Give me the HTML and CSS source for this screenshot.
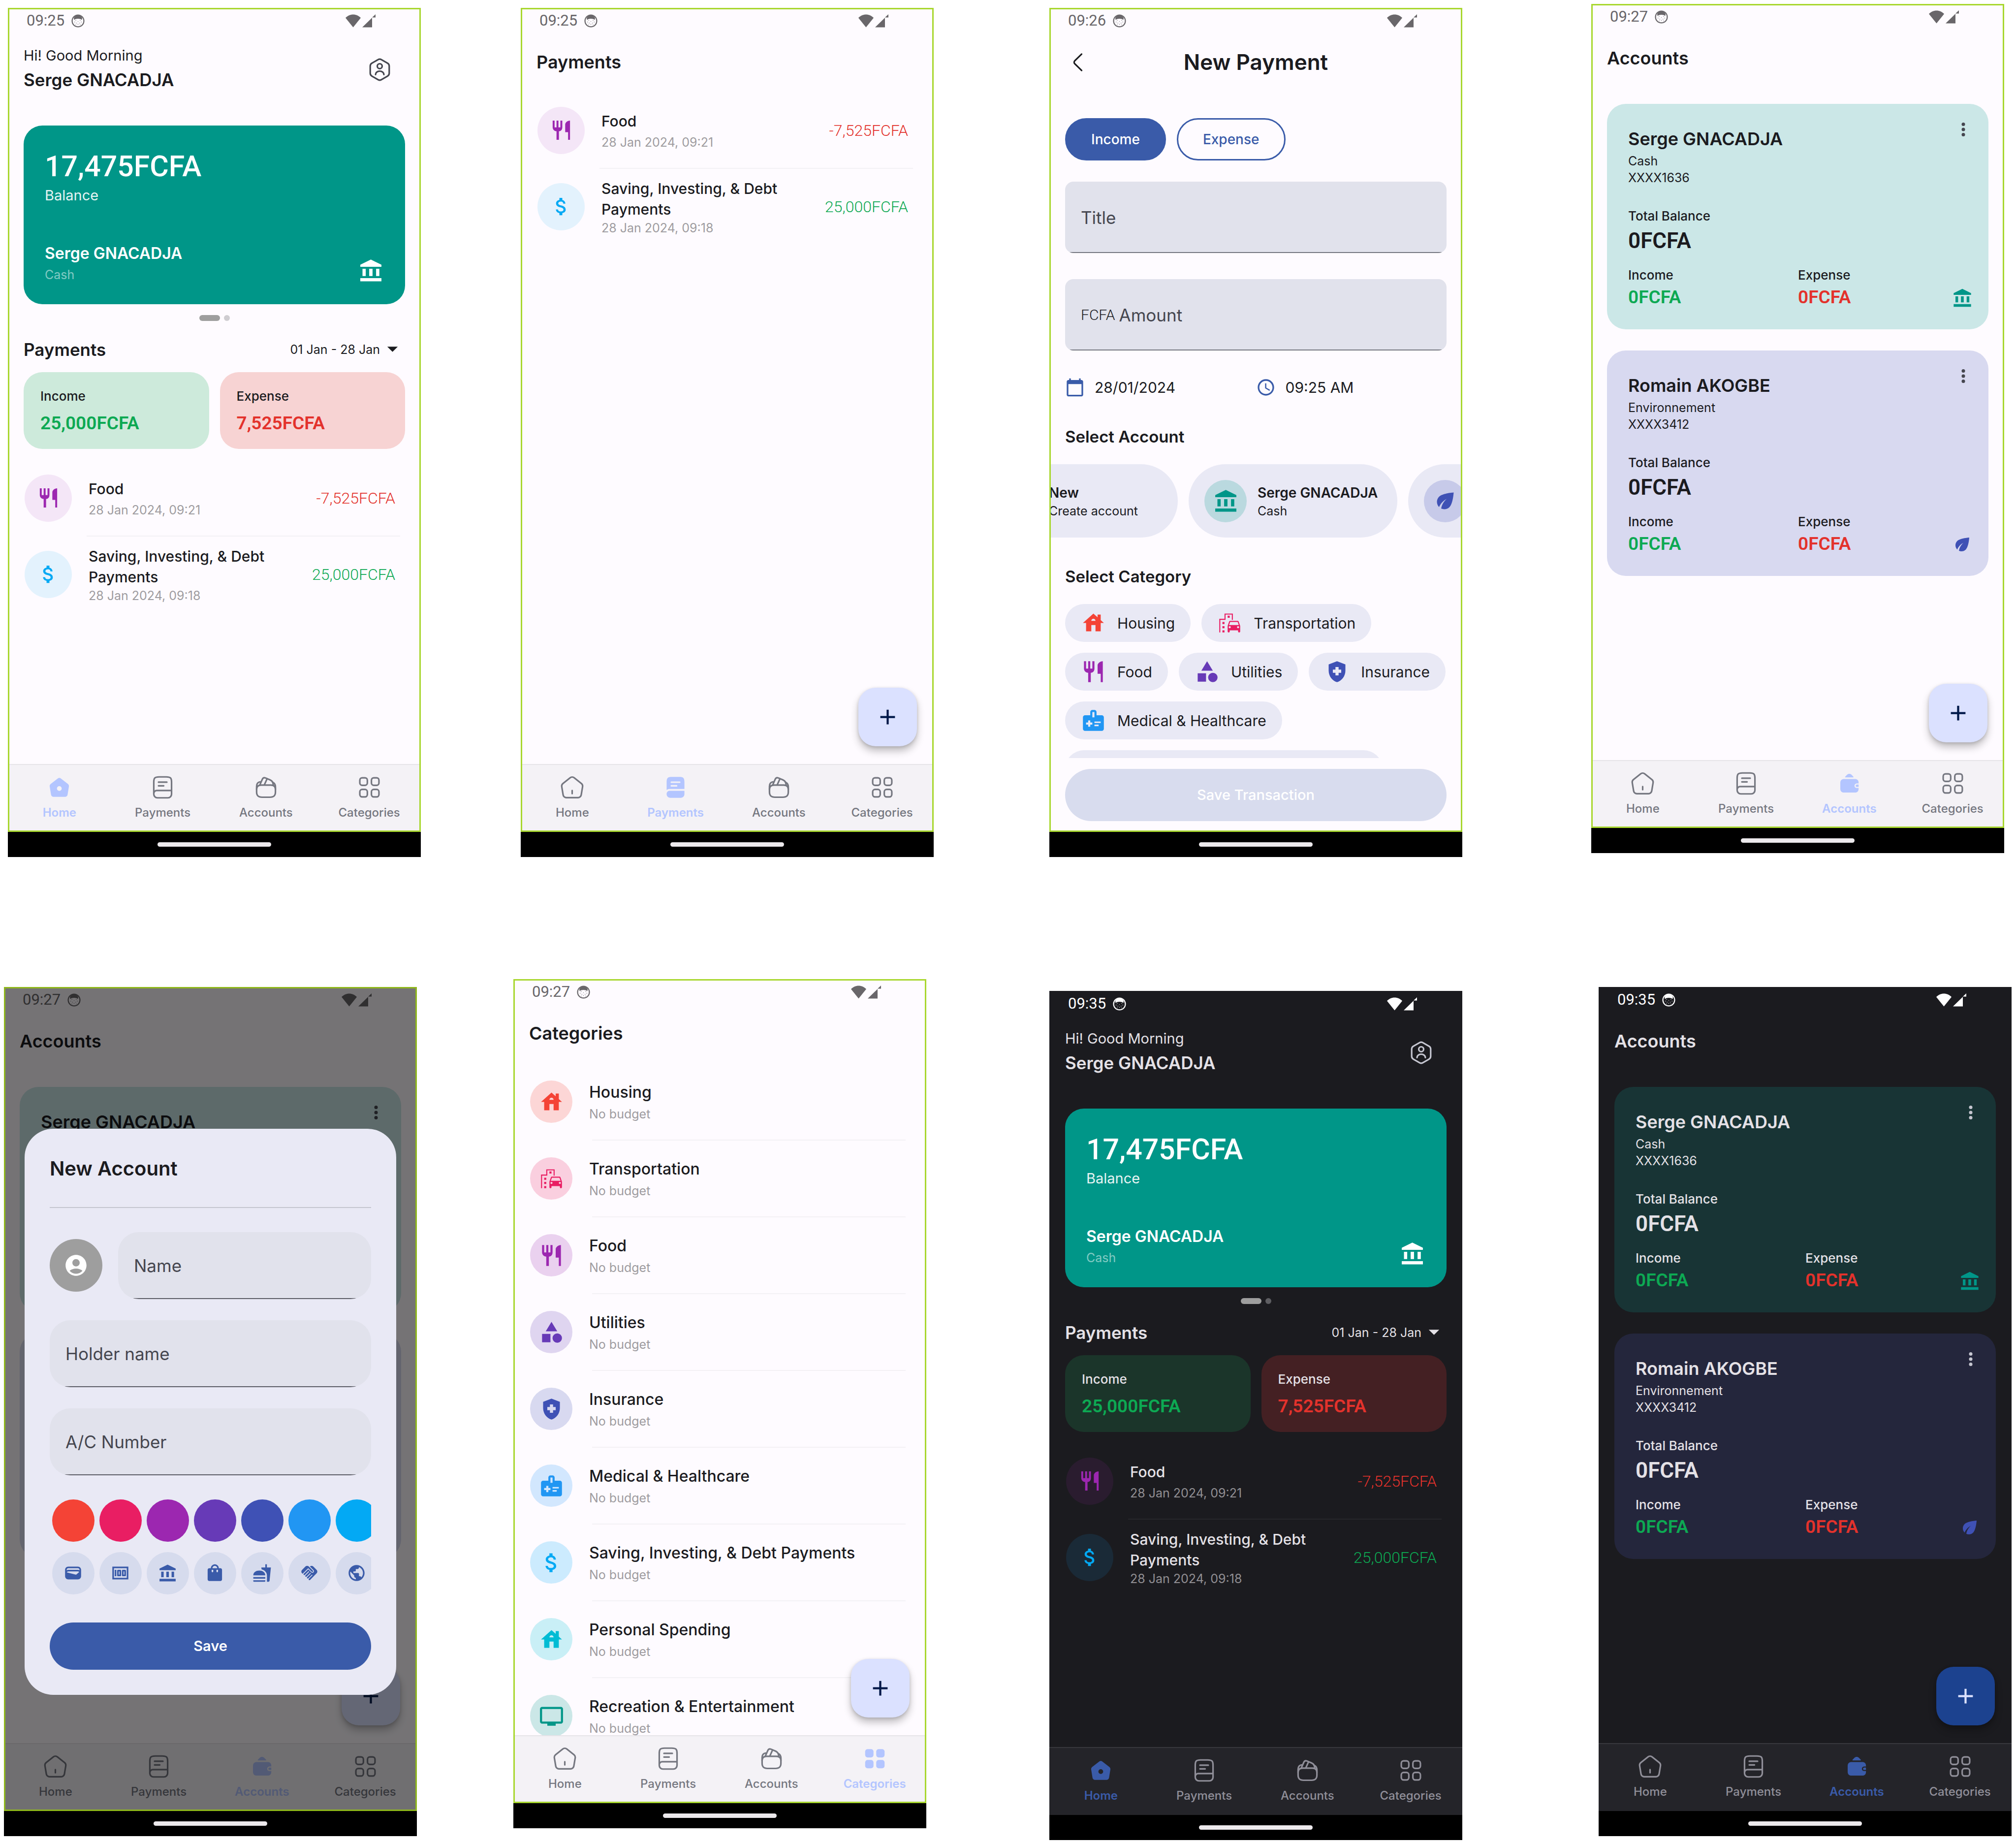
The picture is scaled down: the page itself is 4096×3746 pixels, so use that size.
FILE: index.html
```html
<!DOCTYPE html>
<html lang="en">
<head>
<meta charset="utf-8">
<meta name="viewport" content="width=device-width, initial-scale=1">
<title>Budget app screens</title>
<link rel="stylesheet" href="styles.css">
</head>
<body>
<svg class="sprite" aria-hidden="true">
  <symbol id="face" viewBox="0 0 24 24"><circle cx="12" cy="12" r="10.6" fill="none" stroke="currentColor" stroke-width="2"/><path fill="currentColor" d="M4.6 6.2C6.200 3.400 9 1.800 12 1.800s5.800 1.600 7.400 4.400c.2 1.600-.1 3.200-.9 4.200-.5-1-1.100-1.600-2-1.800-2.800-.7-6.200-.7-9 0-.9.200-1.500.8-2 1.800-.8-1-1.100-2.600-.9-4.200z"/><g fill="currentColor"><circle cx="8" cy="11" r=".6"/><circle cx="16" cy="11" r=".6"/><circle cx="12" cy="13" r=".5"/><circle cx="6" cy="14" r=".6"/><circle cx="18" cy="14" r=".6"/><circle cx="9" cy="16" r=".6"/><circle cx="15" cy="16" r=".6"/><circle cx="12" cy="18" r=".6"/><circle cx="8" cy="19" r=".5"/><circle cx="16" cy="19" r=".5"/></g></symbol>
  <symbol id="wifi" viewBox="0 0 31 27"><path fill="currentColor" d="M15.500 26.500 0 7.300C4.200 3 9.500.5 15.500.5S26.800 3 31 7.300z"/></symbol>
  <symbol id="signal" viewBox="0 0 27 27"><path fill="currentColor" d="M0 26.500 20 7v19.500zM20 6.500 27 0v6.500z"/></symbol>
  <symbol id="profile" viewBox="0 0 24 24"><g fill="none" stroke="currentColor" stroke-width="1.500" stroke-linecap="round" stroke-linejoin="round"><path d="M21.080 8.580v6.840c0 1.120-.6 2.160-1.570 2.730l-5.940 3.430c-.97.56-2.170.56-3.150 0l-5.940-3.430a3.150 3.150 0 0 1-1.570-2.730V8.580c0-1.120.6-2.160 1.570-2.730l5.940-3.430c.97-.56 2.170-.56 3.150 0l5.940 3.430c.97.57 1.570 1.600 1.570 2.730Z"/><circle cx="12" cy="8.670" r="2.330"/><path d="M16 16.660c0-1.800-1.790-3.260-4-3.260s-4 1.460-4 3.260"/></g></symbol>
  <symbol id="bank" viewBox="0 0 24 24"><path fill="currentColor" d="M12 1.500 22.100 6.500v2H1.900v-2zM4 10.300h3.100v7H4zM10.400 10.300h3.200v7h-3.200zM17 10.300h3.100v7H17zM1.900 19.300h20.200v3.100H1.900z"/></symbol>
  <symbol id="caret" viewBox="0 0 24 24"><path fill="currentColor" d="m7 9.500 5 5 5-5z"/></symbol>
  <symbol id="food" viewBox="0 0 24 24"><path fill="currentColor" d="M16 6v8h3v8h2V2c-2.760 0-5 2.240-5 4zm-5 3H9V2H7v7H5V2H3v7c0 2.210 1.790 4 4 4v9h2.500v-9c2.210 0 3.500-1.790 3.500-4V2h-2v7z"/></symbol>
  <symbol id="dollar" viewBox="0 0 24 24"><path fill="currentColor" d="M11.800 10.900c-2.270-.59-3-1.200-3-2.150 0-1.090 1.010-1.850 2.700-1.850 1.780 0 2.440.85 2.500 2.100h2.210c-.07-1.720-1.120-3.300-3.210-3.810V3h-3v2.160c-1.940.42-3.500 1.680-3.500 3.610 0 2.310 1.910 3.460 4.700 4.130 2.500.6 3 1.480 3 2.410 0 .69-.49 1.790-2.700 1.790-2.060 0-2.870-.92-2.980-2.100h-2.200c.12 2.190 1.760 3.420 3.680 3.830V21h3v-2.150c1.950-.37 3.500-1.500 3.500-3.550 0-2.840-2.430-3.810-4.700-4.400z"/></symbol>
  <symbol id="home" viewBox="0 0 24 24"><path fill="none" stroke="currentColor" stroke-width="1.500" stroke-linecap="round" stroke-linejoin="round" d="M10.070 2.820 3.140 8.370c-.78.62-1.280 1.930-1.110 2.910l1.330 7.960c.24 1.420 1.600 2.570 3.040 2.570h11.200c1.430 0 2.800-1.160 3.040-2.570l1.330-7.960c.16-.98-.34-2.290-1.110-2.910l-6.930-5.540c-1.070-.86-2.800-.86-3.860-.01ZM12 18v-3"/></symbol>
  <symbol id="home-on" viewBox="0 0 24 24"><path fill="currentColor" fill-rule="evenodd" d="M10.500 3.500 3.800 8.700c-.7.600-1.100 1.400-1 2.300l1.300 8c.2 1.200 1.200 2 2.400 2h11c1.200 0 2.200-.8 2.400-2l1.300-8c.1-.9-.3-1.700-1-2.300l-6.700-5.200c-.9-.7-2.100-.7-3 0ZM12 10.800a2.300 2.300 0 1 1 0 4.600 2.300 2.300 0 0 1 0-4.600Z"/></symbol>
  <symbol id="book" viewBox="0 0 24 24"><path fill="none" stroke="currentColor" stroke-width="1.500" stroke-linecap="round" stroke-linejoin="round" d="M3.500 18V7c0-4 1-5 5-5h7c4 0 5 1 5 5v10c0 .14 0 .28-.01.42M6.350 15H20.500v3.500c0 1.930-1.570 3.500-3.500 3.500H7c-1.930 0-3.500-1.570-3.500-3.500v-.65C3.500 16.280 4.780 15 6.350 15ZM8 7h8M8 10.500h5"/></symbol>
  <symbol id="book-on" viewBox="0 0 24 24"><path fill="currentColor" fill-rule="evenodd" d="M3.500 14.500V7c0-4 1-5 5-5h7c4 0 5 1 5 5v6.500h-14c-1.200 0-2.200.3-3 1ZM8 6.300a.75.75 0 0 0 0 1.500h8a.75.75 0 0 0 0-1.500zM8 9.800a.75.75 0 0 0 0 1.500h5a.75.75 0 0 0 0-1.500zM6.350 15.300H20.500v3.200c0 1.930-1.570 3.500-3.500 3.500H7c-1.930 0-3.500-1.570-3.500-3.500v-.35c0-1.570 1.280-2.850 2.850-2.850Z"/></symbol>
  <symbol id="wallet" viewBox="0 0 24 24"><g fill="none" stroke="currentColor" stroke-width="1.500" stroke-linecap="round" stroke-linejoin="round"><path d="M3 13.800c0-2.900 1.600-4 4.400-4h9.200c2.800 0 4.400 1.100 4.400 4v2.600c0 3.500-1.600 5-5.200 5H8.200c-3.600 0-5.200-1.500-5.200-5z"/><path d="M3 14v-3c0-2.200 1-3.900 3.300-4.300M21 14v-2.600c0-1.900-.8-3.300-2.200-4.100M6 9.800l2.500-5.600c.6-1.300 1.700-1.700 3-1.200l4.300 1.800c2 .9 3.200 2.500 3 5M10.400 9.600l2.700-6"/></g></symbol>
  <symbol id="wallet-on" viewBox="0 0 24 24"><path fill="currentColor" d="M8.300 6.200c-.5 0-.6-.4-.3-.7l1.800-1.800c1.300-1.200 2.900-1.200 4.200 0l1.800 1.800c.3.300.2.700-.3.700zM20.800 12h-1.300c-1.600 0-2.600.9-2.600 2.200s1 2.200 2.600 2.200h1.300v.6c0 2.500-1.300 3.700-3.700 3.700H7.200c-2.500 0-3.900-1.200-3.900-3.700v-5.500c0-2.500 1.400-3.700 3.900-3.700h9.900c2.400 0 3.700 1.200 3.700 3.500zM19.300 13.100h1.500v2.200h-1.500c-.8 0-1.300-.5-1.300-1.100s.5-1.100 1.300-1.100z"/></symbol>
  <symbol id="grid" viewBox="0 0 24 24"><g fill="none" stroke="currentColor" stroke-width="1.500"><rect x="2.850" y="2.850" width="7.200" height="7.200" rx="2.300"/><rect x="13.950" y="2.850" width="7.200" height="7.200" rx="2.300"/><rect x="2.850" y="13.950" width="7.200" height="7.200" rx="2.300"/><rect x="13.950" y="13.950" width="7.200" height="7.200" rx="2.300"/></g></symbol>
  <symbol id="grid-on" viewBox="0 0 24 24"><g fill="currentColor"><rect x="2.700" y="2.900" width="8" height="8" rx="2.400"/><rect x="13.300" y="2.900" width="8" height="8" rx="2.400"/><rect x="2.700" y="13.300" width="8" height="8" rx="2.400"/><rect x="13.300" y="13.300" width="8" height="8" rx="2.400"/></g></symbol>
  <symbol id="plus" viewBox="0 0 24 24"><path fill="currentColor" d="M19 13h-6v6h-2v-6H5v-2h6V5h2v6h6z"/></symbol>
  <symbol id="back" viewBox="0 0 24 24"><path fill="none" stroke="currentColor" stroke-width="1.500" stroke-linecap="round" stroke-linejoin="round" d="M15.800 4.200 9.300 10.500c-.9.900-.9 2.100 0 3l6.500 6.300"/></symbol>
  <symbol id="calendar" viewBox="0 0 24 24"><path fill="currentColor" d="M20 3h-1V1h-2v2H7V1H5v2H4c-1.100 0-2 .9-2 2v16c0 1.100.9 2 2 2h16c1.100 0 2-.9 2-2V5c0-1.100-.9-2-2-2zm0 18H4V8h16v13z"/></symbol>
  <symbol id="clock" viewBox="0 0 24 24"><path fill="currentColor" d="M11.990 2C6.470 2 2 6.480 2 12s4.470 10 9.990 10C17.520 22 22 17.520 22 12S17.520 2 11.990 2zM12 20c-4.420 0-8-3.580-8-8s3.580-8 8-8 8 3.580 8 8-3.580 8-8 8zm.5-13H11v6l5.250 3.150.75-1.230-4.500-2.670z"/></symbol>
  <symbol id="leaf" viewBox="0 0 24 24"><path fill="currentColor" d="M6.050 8.050c-2.730 2.730-2.730 7.150-.02 9.880 1.470-3.400 4.090-6.240 7.360-7.930-2.770 2.340-4.710 5.610-5.390 9.320 2.600 1.230 5.800.78 7.950-1.370C19.430 14.470 20 4 20 4S9.530 4.570 6.050 8.050z"/></symbol>
  <symbol id="house" viewBox="0 0 24 24"><path fill="currentColor" d="M19 9.300V4h-3v2.600L12 3 2 12h3v8h5v-6h4v6h5v-8h3l-3-2.700zm-9 .7c0-1.100.9-2 2-2s2 .9 2 2h-4z"/></symbol>
  <symbol id="transport" viewBox="0 0 24 24"><path fill="currentColor" d="M20.570 10.660c-.14-.4-.52-.66-.97-.66h-7.190c-.46 0-.83.26-.98.66L10 14.770l.01 5.510c0 .38.31.72.69.72h.62c.38 0 .68-.38.68-.76V19h8v1.240c0 .38.31.76.69.76h.61c.38 0 .69-.34.69-.72l.01-1.370v-4.140l-1.430-4.110zm-8.160.34h7.190l1.030 3h-9.250l1.030-3zM12 17c-.55 0-1-.45-1-1s.45-1 1-1 1 .45 1 1-.45 1-1 1zm8 0c-.55 0-1-.45-1-1s.45-1 1-1 1 .45 1 1-.45 1-1 1zM14 9h1V3H7v5H2v13h1V9h5V4h6zM5 11h2v2H5zM10 5h2v2h-2zM5 15h2v2H5zM5 19h2v2H5z"/></symbol>
  <symbol id="shapes" viewBox="0 0 24 24"><path fill="currentColor" d="m12 2-5.500 9h11zM3 13.500h8v8H3z"/><circle cx="17.500" cy="17.500" r="4.500" fill="currentColor"/></symbol>
  <symbol id="shield" viewBox="0 0 24 24"><path fill="currentColor" fill-rule="evenodd" d="M12 2 4 5v6.090c0 5.050 3.410 9.760 8 10.910 4.590-1.150 8-5.860 8-10.910V5zM10.500 13H8v-3h2.500V7.500h3V10H16v3h-2.500v2.500h-3z"/></symbol>
  <symbol id="medical" viewBox="0 0 24 24"><path fill="currentColor" fill-rule="evenodd" d="M20 7h-5V4c0-1.100-.9-2-2-2h-2c-1.100 0-2 .9-2 2v3H4c-1.100 0-2 .9-2 2v11c0 1.100.9 2 2 2h16c1.100 0 2-.9 2-2V9c0-1.100-.9-2-2-2zM11 4h2v5h-2V4zm0 12H9v2H7v-2H5v-2h2v-2h2v2h2v2zm2-1.500V13h6v1.500h-6zm0 3V16h4v1.500h-4z"/></symbol>
  <symbol id="tv" viewBox="0 0 24 24"><path fill="currentColor" d="M21 3H3c-1.100 0-2 .9-2 2v12c0 1.100.9 2 2 2h5v2h8v-2h5c1.100 0 2-.9 2-2V5c0-1.100-.9-2-2-2zm0 14H3V5h18v12z"/></symbol>
  <symbol id="more" viewBox="0 0 24 24"><g fill="currentColor"><circle cx="12" cy="6" r="2"/><circle cx="12" cy="12" r="2"/><circle cx="12" cy="18" r="2"/></g></symbol>
  <symbol id="person" viewBox="0 0 24 24"><path fill="currentColor" fill-rule="evenodd" d="M12 2C6.480 2 2 6.480 2 12s4.480 10 10 10 10-4.480 10-10S17.520 2 12 2zm0 4c1.930 0 3.500 1.570 3.500 3.500S13.930 13 12 13s-3.500-1.570-3.500-3.500S10.070 6 12 6zm0 14c-2.030 0-4.430-.82-6.140-2.880C7.550 15.800 9.680 15 12 15s4.450.8 6.140 2.120C16.430 19.180 14.030 20 12 20z"/></symbol>
  <symbol id="purse" viewBox="0 0 24 24"><path fill="currentColor" fill-rule="evenodd" d="M18 4H6C3.790 4 2 5.790 2 8v8c0 2.210 1.790 4 4 4h12c2.210 0 4-1.790 4-4V8c0-2.210-1.790-4-4-4zm-1.860 9.770c-.24.2-.57.28-.88.2L4.150 11.250C4.450 10.520 5.160 10 6 10h12c.67 0 1.260.34 1.630.84l-3.490 2.930zM6 6h12c1.100 0 2 .9 2 2v.55c-.59-.34-1.270-.55-2-.55H6c-.73 0-1.410.21-2 .55V8c0-1.100.9-2 2-2z"/></symbol>
  <symbol id="note" viewBox="0 0 24 24"><path fill="currentColor" fill-rule="evenodd" d="M5 8h2v8H5zm7 0H9c-.55 0-1 .45-1 1v6c0 .55.45 1 1 1h3c.55 0 1-.45 1-1V9c0-.55-.45-1-1-1zm-1 6h-1v-4h1v4zm7-6h-3c-.55 0-1 .45-1 1v6c0 .55.45 1 1 1h3c.55 0 1-.45 1-1V9c0-.55-.45-1-1-1zm-1 6h-1v-4h1v4z"/><path fill="currentColor" fill-rule="evenodd" d="M2 4v16h20V4H2zm2 14V6h16v12H4z"/></symbol>
  <symbol id="bag" viewBox="0 0 24 24"><path fill="currentColor" fill-rule="evenodd" d="M19 6h-2c0-2.760-2.240-5-5-5S7 3.240 7 6H5c-1.100 0-2 .9-2 2v12c0 1.100.9 2 2 2h14c1.100 0 2-.9 2-2V8c0-1.100-.9-2-2-2zm-9 4c0 .55-.45 1-1 1s-1-.45-1-1V8h2v2zm2-7c1.660 0 3 1.340 3 3H9c0-1.660 1.340-3 3-3zm4 7c0 .55-.45 1-1 1s-1-.45-1-1V8h2v2z"/></symbol>
  <symbol id="burger" viewBox="0 0 24 24"><path fill="currentColor" d="M18.060 22.990h1.660c.84 0 1.530-.64 1.630-1.460L23 5.050h-5V1h-1.970v4.050h-4.970l.3 2.340c1.710.47 3.310 1.320 4.270 2.260 1.440 1.420 2.430 2.890 2.430 5.290v8.050zM1 21.990V21h15.030v.99c0 .55-.45 1-1.010 1H2.010c-.56 0-1.010-.45-1.010-1zm15.030-7c0-8-15.030-8-15.030 0h15.030zM1.020 17h15v2h-15z"/></symbol>
  <symbol id="hands" viewBox="0 0 24 24"><path fill="currentColor" d="M16.480 10.410c-.39.39-1.040.39-1.430 0l-4.470-4.460-7.050 7.040-.66-.63c-1.170-1.170-1.170-3.070 0-4.240l4.240-4.240c1.170-1.170 3.070-1.170 4.240 0L16.480 9c.39.39.39 1.020 0 1.410zm.7-2.120c.78.78.78 2.050 0 2.830-1.270 1.270-2.610.22-2.830 0l-3.760-3.760-5.570 5.570c-.39.39-.39 1.020 0 1.410.39.39 1.020.39 1.420 0l4.620-4.620.71.71-4.620 4.620c-.39.39-.39 1.020 0 1.410.39.39 1.020.39 1.420 0l4.620-4.620.71.71-4.620 4.620c-.39.39-.39 1.020 0 1.410.39.39 1.020.39 1.410 0l4.620-4.620.71.71-4.620 4.620c-.39.39-.39 1.020 0 1.410.39.39 1.020.39 1.410 0l8.320-8.340c1.170-1.170 1.170-3.070 0-4.240l-4.240-4.240c-1.150-1.150-3.010-1.170-4.180-.06l4.470 4.470z"/></symbol>
  <symbol id="globe" viewBox="0 0 24 24"><path fill="currentColor" fill-rule="evenodd" d="M12 2C6.480 2 2 6.480 2 12s4.480 10 10 10 10-4.480 10-10S17.520 2 12 2zm-1 17.930c-3.950-.49-7-3.850-7-7.930 0-.62.080-1.210.21-1.790L9 15v1c0 1.100.9 2 2 2v1.930zm6.900-2.540c-.26-.81-1-1.390-1.900-1.390h-1v-3c0-.55-.45-1-1-1H8v-2h2c.55 0 1-.45 1-1V7h2c1.100 0 2-.9 2-2v-.41c2.930 1.190 5 4.060 5 7.410 0 2.080-.8 3.970-2.100 5.390z"/></symbol>
</svg>

<main class="board">
  <div class="board-row board-row-top">

    <section class="phone" aria-label="Home">
      <div class="screen">
        <div class="status"><span>09:25</span><svg class="st-face"><use href="#face"/></svg><svg class="st-wifi"><use href="#wifi"/></svg><svg class="st-signal"><use href="#signal"/></svg></div>
        <div class="content padded">
          <header class="greeting">
            <div><p class="hello">Hi! Good Morning</p><h2 class="user">Serge GNACADJA</h2></div>
            <button class="icon-button" type="button" aria-label="Profile"><svg class="icon"><use href="#profile"/></svg></button>
          </header>
          <article class="balance-card">
            <p class="balance-sum">17,475FCFA</p>
            <p class="balance-label">Balance</p>
            <div class="balance-foot">
              <div><h3 class="holder">Serge GNACADJA</h3><p class="small faded">Cash</p></div>
              <svg class="icon"><use href="#bank"/></svg>
            </div>
          </article>
          <div class="pager"><i class="pager-on"></i><i></i></div>
          <div class="section-head"><h3 class="section-title">Payments</h3><button class="range" type="button">01 Jan - 28 Jan<svg class="icon"><use href="#caret"/></svg></button></div>
          <div class="totals">
            <div class="total total-in"><p class="small strong">Income</p><p class="sum in">25,000FCFA</p></div>
            <div class="total total-out"><p class="small strong">Expense</p><p class="sum out">7,525FCFA</p></div>
          </div>
          <ul class="payments">
            <li><span class="disc disc-food"><svg class="icon-list"><use href="#food"/></svg></span><div class="entry"><h4>Food</h4><p class="small muted">28 Jan 2024, 09:21</p></div><span class="amount out">-7,525FCFA</span></li>
            <li><span class="disc disc-saving"><svg class="icon-list"><use href="#dollar"/></svg></span><div class="entry"><h4>Saving, Investing, &amp; Debt Payments</h4><p class="small muted">28 Jan 2024, 09:18</p></div><span class="amount in">25,000FCFA</span></li>
          </ul>
        </div>
        <nav class="tabs">
          <a class="tab-on" href="#"><svg class="icon"><use href="#home-on"/></svg>Home</a>
          <a href="#"><svg class="icon"><use href="#book"/></svg>Payments</a>
          <a href="#"><svg class="icon"><use href="#wallet"/></svg>Accounts</a>
          <a href="#"><svg class="icon"><use href="#grid"/></svg>Categories</a>
        </nav>
      </div>
      <div class="gesture"><i></i></div>
    </section>

    <section class="phone" aria-label="Payments">
      <div class="screen">
        <div class="status"><span>09:25</span><svg class="st-face"><use href="#face"/></svg><svg class="st-wifi"><use href="#wifi"/></svg><svg class="st-signal"><use href="#signal"/></svg></div>
        <div class="content padded">
          <header class="titlebar"><h2>Payments</h2></header>
          <ul class="payments payments-page">
            <li><span class="disc disc-food"><svg class="icon-list"><use href="#food"/></svg></span><div class="entry"><h4>Food</h4><p class="small muted">28 Jan 2024, 09:21</p></div><span class="amount out">-7,525FCFA</span></li>
            <li><span class="disc disc-saving"><svg class="icon-list"><use href="#dollar"/></svg></span><div class="entry"><h4>Saving, Investing, &amp; Debt Payments</h4><p class="small muted">28 Jan 2024, 09:18</p></div><span class="amount in">25,000FCFA</span></li>
          </ul>
          <button class="fab" type="button" aria-label="Add payment"><svg class="icon"><use href="#plus"/></svg></button>
        </div>
        <nav class="tabs">
          <a href="#"><svg class="icon"><use href="#home"/></svg>Home</a>
          <a class="tab-on" href="#"><svg class="icon"><use href="#book-on"/></svg>Payments</a>
          <a href="#"><svg class="icon"><use href="#wallet"/></svg>Accounts</a>
          <a href="#"><svg class="icon"><use href="#grid"/></svg>Categories</a>
        </nav>
      </div>
      <div class="gesture"><i></i></div>
    </section>

    <section class="phone" aria-label="New payment">
      <div class="screen">
        <div class="status"><span>09:26</span><svg class="st-face"><use href="#face"/></svg><svg class="st-wifi"><use href="#wifi"/></svg><svg class="st-signal"><use href="#signal"/></svg></div>
        <div class="content">
          <header class="titlebar titlebar-center"><button class="back" type="button" aria-label="Back"><svg class="icon"><use href="#back"/></svg></button><h2>New Payment</h2></header>
          <div class="toggle"><button class="toggle-on" type="button">Income</button><button type="button">Expense</button></div>
          <div class="fields">
            <label class="field"><input type="text" placeholder="Title" aria-label="Title"></label>
            <label class="field"><span class="currency">FCFA</span><input type="text" placeholder="Amount" aria-label="Amount"></label>
          </div>
          <div class="when"><div><svg><use href="#calendar"/></svg>28/01/2024</div><div><svg><use href="#clock"/></svg>09:25 AM</div></div>
          <h3 class="pick-title">Select Account</h3>
          <div class="account-strip">
            <button class="account-chip account-chip-new" type="button"><span class="badge badge-new"><svg class="icon"><use href="#plus"/></svg></span><span><b>New</b><small>Create account</small></span></button>
            <button class="account-chip" type="button"><span class="badge badge-teal"><svg class="icon"><use href="#bank"/></svg></span><span><b>Serge GNACADJA</b><small>Cash</small></span></button>
            <button class="account-chip account-chip-peek" type="button" aria-label="Romain AKOGBE"><span class="badge badge-indigo"><svg class="icon"><use href="#leaf"/></svg></span></button>
          </div>
          <h3 class="pick-title">Select Category</h3>
          <div class="chips">
            <button type="button"><svg class="icon red"><use href="#house"/></svg>Housing</button>
            <button type="button"><svg class="icon pink"><use href="#transport"/></svg>Transportation</button>
            <button type="button"><svg class="icon purple"><use href="#food"/></svg>Food</button>
            <button type="button"><svg class="icon violet"><use href="#shapes"/></svg>Utilities</button>
            <button type="button"><svg class="icon indigo"><use href="#shield"/></svg>Insurance</button>
            <button type="button"><svg class="icon blue"><use href="#medical"/></svg>Medical &amp; Healthcare</button>
            <button class="chip-peek" type="button" aria-label="Saving, Investing, &amp; Debt Payments"></button>
          </div>
        </div>
        <div class="save-bar"><button class="save-off" type="button">Save Transaction</button></div>
      </div>
      <div class="gesture"><i></i></div>
    </section>

    <section class="phone phone-high" aria-label="Accounts">
      <div class="screen">
        <div class="status"><span>09:27</span><svg class="st-face"><use href="#face"/></svg><svg class="st-wifi"><use href="#wifi"/></svg><svg class="st-signal"><use href="#signal"/></svg></div>
        <div class="content padded">
          <header class="titlebar"><h2>Accounts</h2></header>
          <div class="accounts">
            <article class="account account-teal">
              <div class="account-head"><div><h3>Serge GNACADJA</h3><p class="small">Cash</p><p class="small">XXXX1636</p></div><button class="icon-button" type="button" aria-label="More"><svg class="icon-small"><use href="#more"/></svg></button></div>
              <p class="small strong account-label">Total Balance</p><p class="account-sum">0FCFA</p>
              <div class="account-foot"><div><p class="small strong">Income</p><p class="sum in">0FCFA</p></div><div><p class="small strong">Expense</p><p class="sum out">0FCFA</p></div><svg class="icon-small teal"><use href="#bank"/></svg></div>
            </article>
            <article class="account account-indigo">
              <div class="account-head"><div><h3>Romain AKOGBE</h3><p class="small">Environnement</p><p class="small">XXXX3412</p></div><button class="icon-button" type="button" aria-label="More"><svg class="icon-small"><use href="#more"/></svg></button></div>
              <p class="small strong account-label">Total Balance</p><p class="account-sum">0FCFA</p>
              <div class="account-foot"><div><p class="small strong">Income</p><p class="sum in">0FCFA</p></div><div><p class="small strong">Expense</p><p class="sum out">0FCFA</p></div><svg class="icon-small indigo"><use href="#leaf"/></svg></div>
            </article>
          </div>
          <button class="fab" type="button" aria-label="Add account"><svg class="icon"><use href="#plus"/></svg></button>
        </div>
        <nav class="tabs">
          <a href="#"><svg class="icon"><use href="#home"/></svg>Home</a>
          <a href="#"><svg class="icon"><use href="#book"/></svg>Payments</a>
          <a class="tab-on" href="#"><svg class="icon"><use href="#wallet-on"/></svg>Accounts</a>
          <a href="#"><svg class="icon"><use href="#grid"/></svg>Categories</a>
        </nav>
      </div>
      <div class="gesture"><i></i></div>
    </section>
  </div>

  <div class="board-row board-row-bottom">

    <section class="phone phone-modal" aria-label="New account">
      <div class="screen">
        <div class="status"><span>09:27</span><svg class="st-face"><use href="#face"/></svg><svg class="st-wifi"><use href="#wifi"/></svg><svg class="st-signal"><use href="#signal"/></svg></div>
        <div class="content padded">
          <header class="titlebar"><h2>Accounts</h2></header>
          <div class="accounts">
            <article class="account account-teal">
              <div class="account-head"><div><h3>Serge GNACADJA</h3></div><button class="icon-button" type="button" aria-label="More"><svg class="icon-small"><use href="#more"/></svg></button></div>
            </article>
            <article class="account account-indigo"></article>
          </div>
          <button class="fab" type="button" aria-label="Add account"><svg class="icon"><use href="#plus"/></svg></button>
        </div>
        <nav class="tabs">
          <a href="#"><svg class="icon"><use href="#home"/></svg>Home</a>
          <a href="#"><svg class="icon"><use href="#book"/></svg>Payments</a>
          <a class="tab-on" href="#"><svg class="icon"><use href="#wallet-on"/></svg>Accounts</a>
          <a href="#"><svg class="icon"><use href="#grid"/></svg>Categories</a>
        </nav>
        <div class="scrim"></div>
      </div>
      <div class="gesture"><i></i></div>
      <div class="dialog-layer">
        <form class="dialog" aria-label="New Account">
          <h2>New Account</h2>
          <div class="dialog-fields">
            <div class="name-row"><span class="avatar"><svg class="icon"><use href="#person"/></svg></span><input type="text" placeholder="Name" aria-label="Name"></div>
            <input type="text" placeholder="Holder name" aria-label="Holder name">
            <input type="text" placeholder="A/C Number" aria-label="A/C Number">
          </div>
          <div class="strip swatches">
            <button class="bg-red" type="button" aria-label="Red"></button>
            <button class="bg-pink" type="button" aria-label="Pink"></button>
            <button class="bg-purple" type="button" aria-label="Purple"></button>
            <button class="bg-violet" type="button" aria-label="Violet"></button>
            <button class="bg-indigo" type="button" aria-label="Indigo"></button>
            <button class="bg-blue" type="button" aria-label="Blue"></button>
            <button class="bg-sky" type="button" aria-label="Sky"></button>
          </div>
          <div class="strip">
            <button type="button" aria-label="Wallet"><svg><use href="#purse"/></svg></button>
            <button type="button" aria-label="Banknote"><svg><use href="#note"/></svg></button>
            <button type="button" aria-label="Bank"><svg><use href="#bank"/></svg></button>
            <button type="button" aria-label="Shopping"><svg><use href="#bag"/></svg></button>
            <button type="button" aria-label="Food"><svg><use href="#burger"/></svg></button>
            <button type="button" aria-label="Handshake"><svg><use href="#hands"/></svg></button>
            <button type="button" aria-label="World"><svg><use href="#globe"/></svg></button>
          </div>
          <button class="save" type="button">Save</button>
        </form>
      </div>
    </section>

    <section class="phone phone-high" aria-label="Categories">
      <div class="screen">
        <div class="status"><span>09:27</span><svg class="st-face"><use href="#face"/></svg><svg class="st-wifi"><use href="#wifi"/></svg><svg class="st-signal"><use href="#signal"/></svg></div>
        <div class="content padded">
          <header class="titlebar"><h2>Categories</h2></header>
          <ul class="categories">
            <li><span class="badge tint-red"><svg class="icon"><use href="#house"/></svg></span><div><h4>Housing</h4><p class="small muted">No budget</p></div></li>
            <li><span class="badge tint-pink"><svg class="icon"><use href="#transport"/></svg></span><div><h4>Transportation</h4><p class="small muted">No budget</p></div></li>
            <li><span class="badge tint-purple"><svg class="icon"><use href="#food"/></svg></span><div><h4>Food</h4><p class="small muted">No budget</p></div></li>
            <li><span class="badge tint-violet"><svg class="icon"><use href="#shapes"/></svg></span><div><h4>Utilities</h4><p class="small muted">No budget</p></div></li>
            <li><span class="badge tint-indigo"><svg class="icon"><use href="#shield"/></svg></span><div><h4>Insurance</h4><p class="small muted">No budget</p></div></li>
            <li><span class="badge tint-blue"><svg class="icon"><use href="#medical"/></svg></span><div><h4>Medical &amp; Healthcare</h4><p class="small muted">No budget</p></div></li>
            <li><span class="badge tint-sky"><svg class="icon"><use href="#dollar"/></svg></span><div><h4>Saving, Investing, &amp; Debt Payments</h4><p class="small muted">No budget</p></div></li>
            <li><span class="badge tint-cyan"><svg class="icon"><use href="#house"/></svg></span><div><h4>Personal Spending</h4><p class="small muted">No budget</p></div></li>
            <li><span class="badge tint-teal"><svg class="icon"><use href="#tv"/></svg></span><div><h4>Recreation &amp; Entertainment</h4><p class="small muted">No budget</p></div></li>
          </ul>
          <button class="fab" type="button" aria-label="Add category"><svg class="icon"><use href="#plus"/></svg></button>
        </div>
        <nav class="tabs">
          <a href="#"><svg class="icon"><use href="#home"/></svg>Home</a>
          <a href="#"><svg class="icon"><use href="#book"/></svg>Payments</a>
          <a href="#"><svg class="icon"><use href="#wallet"/></svg>Accounts</a>
          <a class="tab-on" href="#"><svg class="icon"><use href="#grid-on"/></svg>Categories</a>
        </nav>
      </div>
      <div class="gesture"><i></i></div>
    </section>

    <section class="phone phone-low dark" aria-label="Home, dark theme">
      <div class="screen">
        <div class="status"><span>09:35</span><svg class="st-face"><use href="#face"/></svg><svg class="st-wifi"><use href="#wifi"/></svg><svg class="st-signal"><use href="#signal"/></svg></div>
        <div class="content padded">
          <header class="greeting">
            <div><p class="hello">Hi! Good Morning</p><h2 class="user">Serge GNACADJA</h2></div>
            <button class="icon-button" type="button" aria-label="Profile"><svg class="icon"><use href="#profile"/></svg></button>
          </header>
          <article class="balance-card">
            <p class="balance-sum">17,475FCFA</p>
            <p class="balance-label">Balance</p>
            <div class="balance-foot">
              <div><h3 class="holder">Serge GNACADJA</h3><p class="small faded">Cash</p></div>
              <svg class="icon"><use href="#bank"/></svg>
            </div>
          </article>
          <div class="pager"><i class="pager-on"></i><i></i></div>
          <div class="section-head"><h3 class="section-title">Payments</h3><button class="range" type="button">01 Jan - 28 Jan<svg class="icon"><use href="#caret"/></svg></button></div>
          <div class="totals">
            <div class="total total-in"><p class="small strong">Income</p><p class="sum in">25,000FCFA</p></div>
            <div class="total total-out"><p class="small strong">Expense</p><p class="sum out">7,525FCFA</p></div>
          </div>
          <ul class="payments">
            <li><span class="disc disc-food"><svg class="icon-list"><use href="#food"/></svg></span><div class="entry"><h4>Food</h4><p class="small muted">28 Jan 2024, 09:21</p></div><span class="amount out">-7,525FCFA</span></li>
            <li><span class="disc disc-saving"><svg class="icon-list"><use href="#dollar"/></svg></span><div class="entry"><h4>Saving, Investing, &amp; Debt Payments</h4><p class="small muted">28 Jan 2024, 09:18</p></div><span class="amount in">25,000FCFA</span></li>
          </ul>
        </div>
        <nav class="tabs">
          <a class="tab-on" href="#"><svg class="icon"><use href="#home-on"/></svg>Home</a>
          <a href="#"><svg class="icon"><use href="#book"/></svg>Payments</a>
          <a href="#"><svg class="icon"><use href="#wallet"/></svg>Accounts</a>
          <a href="#"><svg class="icon"><use href="#grid"/></svg>Categories</a>
        </nav>
      </div>
      <div class="gesture"><i></i></div>
    </section>

    <section class="phone dark" aria-label="Accounts, dark theme">
      <div class="screen">
        <div class="status"><span>09:35</span><svg class="st-face"><use href="#face"/></svg><svg class="st-wifi"><use href="#wifi"/></svg><svg class="st-signal"><use href="#signal"/></svg></div>
        <div class="content padded">
          <header class="titlebar"><h2>Accounts</h2></header>
          <div class="accounts">
            <article class="account account-teal">
              <div class="account-head"><div><h3>Serge GNACADJA</h3><p class="small">Cash</p><p class="small">XXXX1636</p></div><button class="icon-button" type="button" aria-label="More"><svg class="icon-small"><use href="#more"/></svg></button></div>
              <p class="small strong account-label">Total Balance</p><p class="account-sum">0FCFA</p>
              <div class="account-foot"><div><p class="small strong">Income</p><p class="sum in">0FCFA</p></div><div><p class="small strong">Expense</p><p class="sum out">0FCFA</p></div><svg class="icon-small teal"><use href="#bank"/></svg></div>
            </article>
            <article class="account account-indigo">
              <div class="account-head"><div><h3>Romain AKOGBE</h3><p class="small">Environnement</p><p class="small">XXXX3412</p></div><button class="icon-button" type="button" aria-label="More"><svg class="icon-small"><use href="#more"/></svg></button></div>
              <p class="small strong account-label">Total Balance</p><p class="account-sum">0FCFA</p>
              <div class="account-foot"><div><p class="small strong">Income</p><p class="sum in">0FCFA</p></div><div><p class="small strong">Expense</p><p class="sum out">0FCFA</p></div><svg class="icon-small indigo"><use href="#leaf"/></svg></div>
            </article>
          </div>
          <button class="fab" type="button" aria-label="Add account"><svg class="icon"><use href="#plus"/></svg></button>
        </div>
        <nav class="tabs">
          <a href="#"><svg class="icon"><use href="#home"/></svg>Home</a>
          <a href="#"><svg class="icon"><use href="#book"/></svg>Payments</a>
          <a class="tab-on" href="#"><svg class="icon"><use href="#wallet-on"/></svg>Accounts</a>
          <a href="#"><svg class="icon"><use href="#grid"/></svg>Categories</a>
        </nav>
      </div>
      <div class="gesture"><i></i></div>
    </section>
  </div>
</main>
</body>
</html>
```
FILE: styles.css
```css
:root {
  --red: #f44336;
  --pink: #e91e63;
  --purple: #9c27b0;
  --violet: #673ab7;
  --indigo: #3f51b5;
  --blue: #2196f3;
  --sky: #03a9f4;
  --cyan: #00bcd4;
  --teal: #009688;
  --primary: #3a5ba9;
  --in: #0da953;
  --out: #e3322c;
}

* { box-sizing: border-box; margin: 0; padding: 0; }

body {
  background: #fff;
  font-family: Inter, "Liberation Sans", sans-serif;
  font-size: 29px;
  line-height: 40px;
}

h2, h3, h4 { font-weight: 600; }
ul { list-style: none; }
button, input { font: inherit; color: inherit; border: 0; background: none; outline: 0; }
button { cursor: pointer; }
a { color: inherit; text-decoration: none; }
svg { display: block; flex: none; }
.sprite { position: absolute; width: 0; height: 0; }

/* Board of screens */
.board { padding: 8px 0; }
.board-row { display: flex; align-items: flex-start; }
.board-row-top { padding: 0 24px 0 16px; }
.board-row-bottom { padding: 0 9px 0 8px; margin-top: 248px; }
.board-row-top .phone:nth-child(2) { margin-left: 203px; }
.board-row-top .phone:nth-child(3) { margin-left: 235px; }
.board-row-top .phone:nth-child(4) { margin-left: 262px; }
.board-row-bottom .phone:nth-child(2) { margin-left: 196px; }
.board-row-bottom .phone:nth-child(3) { margin-left: 250px; }
.board-row-bottom .phone:nth-child(4) { margin-left: 277px; }

/* Phone */
.phone {
  --bg: #fefbff;
  --text: #1b1b1f;
  --icon: #45464f;
  --status: #69666a;
  --tabs: #f4f2f6;
  --line: #e6e4e8;
  --rule: #f3f1f5;
  --tab: #757780;
  --tab-on: #b3c5ff;
  --frame: #a8d72f;
  --total-in: #cdeadb;
  --total-out: #f7d3d3;
  --food: #f4e6f7;
  --saving: #e3f2fd;
  --account-teal: #cbe7e7;
  --account-indigo: #d8d9f0;
  --fab: #dbe1ff;
  --fab-icon: #001849;
  --dot: #cfcdd1;
  --muted: #9e9ca0;
  position: relative;
  flex: 1 1 0;
  min-width: 0;
  min-height: 1725px;
  margin-top: 8px;
  display: flex;
  flex-direction: column;
  color: var(--text);
}
.board-row-bottom .phone { margin-top: 16px; }
.board-row .phone-high { margin-top: 0; }
.board-row .phone-low { margin-top: 24px; }
.dark {
  --bg: #1b1b1f;
  --text: #e4e1e6;
  --icon: #c5c6d0;
  --status: #fff;
  --tabs: #242429;
  --line: #38383d;
  --rule: #27272b;
  --tab: #908f99;
  --tab-on: #3a5ba9;
  --frame: transparent;
  --total-in: #1b352a;
  --total-out: #442023;
  --food: #2a1c2f;
  --saving: #1a2a37;
  --account-teal: #183435;
  --account-indigo: #24263c;
  --fab: #1c428f;
  --fab-icon: #dbe1ff;
  --dot: #5e5e62;
  --muted: #918f93;
}
.phone-modal { --frame: #8fb71c; }
.screen {
  position: relative;
  flex: 1;
  display: flex;
  flex-direction: column;
  background: var(--bg);
}
.screen::after {
  content: "";
  position: absolute;
  inset: 0;
  border: 3px solid var(--frame);
  pointer-events: none;
}
.gesture {
  height: 51px;
  background: #000;
  display: flex;
  align-items: center;
  justify-content: center;
}
.gesture i { width: 231px; height: 9px; border-radius: 5px; background: #ece9ec; }

.status {
  height: 52px;
  padding: 0 92px 0 38px;
  display: flex;
  align-items: center;
  color: var(--status);
  font-family: Roboto, sans-serif;
  font-size: 31px;
}
.st-face { width: 27px; height: 27px; margin: 0 auto 0 14px; }
.st-wifi { width: 31px; height: 27px; margin-right: 3px; }
.st-signal { width: 27px; height: 27px; }

.content { position: relative; flex: 1 1 0; min-height: 0; overflow: hidden; }
.padded { padding: 0 32px; }
.icon { width: 51px; height: 51px; }
.icon-list { width: 47px; height: 47px; }
.icon-small { width: 42px; height: 42px; }
.icon-button {
  width: 103px;
  height: 103px;
  display: flex;
  align-items: center;
  justify-content: center;
  color: var(--icon);
}

.small { font-size: 25px; line-height: 34px; }
.strong { font-size: 26px; font-weight: 500; }
.muted { color: var(--muted); }
.in { color: var(--in); }
.out { color: var(--out); }
.sum, .amount, .account-sum, .balance-sum, .currency { font-family: Roboto, sans-serif; }
.sum { font-size: 37px; line-height: 44px; font-weight: 600; }

.titlebar { height: 120px; padding-bottom: 4px; display: flex; align-items: center; }
.titlebar h2 { font-size: 36px; line-height: 48px; }

/* Home */
.greeting { padding: 22px 0 20px; display: flex; justify-content: space-between; align-items: center; }
.greeting > div { padding-bottom: 4px; }
.hello { font-size: 29px; line-height: 44px; }
.user { font-size: 35px; line-height: 54px; }
.balance-card {
  margin-top: 42px;
  height: 363px;
  padding: 44px 44px 43px 43px;
  border-radius: 38px;
  background: var(--teal);
  color: #fff;
  display: flex;
  flex-direction: column;
}
.balance-sum { font-size: 59px; line-height: 78px; font-weight: 500; }
.balance-label { opacity: .9; }
.balance-foot { margin-top: auto; display: flex; justify-content: space-between; align-items: flex-end; }
.holder { font-size: 32px; line-height: 42px; margin-bottom: 5px; }
.faded { opacity: .5; }
.pager { margin-top: 22px; display: flex; justify-content: center; gap: 8px; }
.pager i { width: 12px; height: 12px; border-radius: 6px; background: var(--dot); }
.pager .pager-on { width: 42px; background: #9e9e9e; }
.section-head { margin-top: 32px; display: flex; justify-content: space-between; align-items: center; }
.section-title { font-size: 35px; line-height: 48px; }
.range { display: flex; align-items: center; font-size: 25px; }
.totals { margin-top: 21px; display: grid; grid-template-columns: 1fr 1fr; gap: 22px; }
.total { padding: 32px 34px 30px; border-radius: 38px; }
.total .sum { margin-top: 16px; }
.total-in { background: var(--total-in); }
.total-out { background: var(--total-out); }

.payments { margin-top: 23px; }
.payments-page { margin-top: 0; }
.payments li {
  position: relative;
  min-height: 155px;
  padding: 0 20px 2px 2px;
  display: flex;
  align-items: center;
}
.payments li:not(:last-child)::after,
.categories li:not(:last-child)::after {
  content: "";
  position: absolute;
  left: 128px;
  right: 10px;
  bottom: 0;
  height: 2px;
  background: var(--rule);
}
.disc {
  flex: none;
  width: 96px;
  height: 96px;
  border-radius: 50%;
  display: flex;
  align-items: center;
  justify-content: center;
}
.disc-food { background: var(--food); color: var(--purple); }
.disc-saving { background: var(--saving); color: #03a9f4; }
.entry {
  flex: 1;
  min-width: 0;
  min-height: 83px;
  padding: 2px 16px 0 34px;
  display: flex;
  flex-direction: column;
  justify-content: space-between;
}
.entry h4 { font-size: 30px; line-height: 42px; font-weight: 500; }
.amount { font-size: 32px; font-weight: 300; }

/* Tab bar */
.tabs {
  border-top: 2px solid var(--line);
  background: var(--tabs);
  color: var(--tab);
  display: grid;
  grid-template-columns: repeat(4, 1fr);
  font-size: 24px;
  line-height: 28px;
  font-weight: 500;
}
.tabs a { height: 136px; padding-top: 20px; display: flex; flex-direction: column; align-items: center; gap: 12px; }
.tabs .tab-on { color: var(--tab-on); font-weight: 600; }

.fab {
  position: absolute;
  right: 34px;
  bottom: 36px;
  width: 119px;
  height: 119px;
  border-radius: 35px;
  background: var(--fab);
  color: var(--fab-icon);
  box-shadow: 0 10px 16px rgba(0, 0, 0, .24), 0 2px 6px rgba(0, 0, 0, .14);
  display: flex;
  align-items: center;
  justify-content: center;
}

/* New payment */
.titlebar-center { padding: 0 32px 4px; display: grid; grid-template-columns: 51px 1fr 51px; }
.titlebar-center h2 { text-align: center; font-size: 44px; line-height: 56px; }
.toggle { margin-top: 52px; padding: 0 32px; display: flex; gap: 22px; }
.toggle button {
  height: 86px;
  padding: 0 50px;
  border: 3px solid var(--primary);
  border-radius: 43px;
  color: var(--primary);
  font-size: 28px;
  font-weight: 500;
}
.toggle .toggle-on { background: var(--primary); color: #fff; }
.fields { margin-top: 43px; padding: 0 32px; display: grid; gap: 53px; }
.field {
  height: 145px;
  padding: 0 32px;
  border-radius: 17px;
  background: linear-gradient(#757780, #757780) bottom / 100% 2px no-repeat #e1e2ec;
  display: flex;
  align-items: center;
  gap: 8px;
}
.field input { flex: 1; min-width: 0; }
.field input, .dialog input { font-size: 35px; line-height: 44px; }
input::placeholder { color: #45464f; opacity: 1; }
.currency { font-size: 30px; font-weight: 300; }
.when { margin-top: 55px; padding: 0 32px; display: grid; grid-template-columns: 1fr 1fr; font-size: 30px; }
.when div { display: flex; align-items: center; gap: 20px; }
.when svg { width: 40px; height: 40px; color: var(--primary); }
.pick-title { margin: 58px 32px 34px; font-size: 33px; line-height: 44px; }
.account-strip { display: flex; gap: 22px; overflow: hidden; }
.account-strip + .pick-title { margin-top: 57px; }
.account-chip {
  flex: none;
  height: 149px;
  padding: 0 40px 0 32px;
  border-radius: 75px;
  background: #e9e9f5;
  display: flex;
  align-items: center;
  gap: 22px;
  text-align: left;
}
.account-chip-new { width: 402px; margin-left: -141px; }
.account-chip-peek { width: 420px; }
.account-chip b { display: block; font-size: 28px; line-height: 40px; font-weight: 600; }
.account-chip small { display: block; font-size: 25px; line-height: 34px; }
.badge {
  flex: none;
  width: 86px;
  height: 86px;
  border-radius: 50%;
  display: flex;
  align-items: center;
  justify-content: center;
}
.badge-new { background: #d6dbed; color: var(--primary); }
.badge-teal { background: #bad9df; color: var(--teal); }
.badge-indigo { background: #c7cae9; color: var(--indigo); }
.chips { padding: 0 32px; display: flex; flex-wrap: wrap; gap: 22px; }
.chips button {
  height: 77px;
  padding: 0 32px;
  border-radius: 39px;
  background: #e9e9f5;
  display: flex;
  align-items: center;
  gap: 23px;
  font-size: 30px;
}
.chips .chip-peek { width: 645px; }
.save-bar { padding: 22px 32px; }
.save-off, .save {
  width: 100%;
  height: 106px;
  border-radius: 53px;
  background: #d8dcee;
  color: #fff;
  font-weight: 500;
}

/* Accounts */
.accounts { margin-top: 31px; display: grid; gap: 43px; }
.account { min-height: 457px; padding: 0 32px 37px 43px; border-radius: 38px; }
.account-teal { background: var(--account-teal); }
.account-indigo { background: var(--account-indigo); }
.account-head { display: flex; justify-content: space-between; align-items: flex-start; height: 167px; margin-right: -32px; }
.account-head > div { padding-top: 43px; }
.account h3 { font-size: 36px; line-height: 56px; }
.account-label { margin-top: 44px; }
.account-sum { font-size: 44px; line-height: 66px; font-weight: 600; }
.account-foot { margin-top: 20px; display: grid; grid-template-columns: 345px 1fr auto; align-items: end; }
.account-foot .sum { line-height: 56px; }
.account-foot svg { margin-bottom: 6px; }

/* Categories */
.categories li {
  position: relative;
  height: 156px;
  padding: 0 2px 2px;
  display: flex;
  align-items: center;
  gap: 34px;
}
.categories li > div { padding-top: 2px; }
.categories h4 { font-size: 32px; line-height: 42px; font-weight: 500; margin-bottom: 6px; }

/* Dialog */
.scrim { position: absolute; inset: 0; background: rgba(0, 0, 0, .54); }
.dialog-layer { position: absolute; inset: 0; display: flex; align-items: center; justify-content: center; }
.dialog { width: 90%; padding: 51px; border-radius: 58px; background: #e9e9f5; }
.dialog h2 {
  padding-bottom: 48px;
  border-bottom: 2px solid #c5c6d0;
  font-size: 40px;
  line-height: 60px;
}
.dialog-fields { margin-top: 49px; display: grid; gap: 43px; }
.name-row { display: flex; align-items: center; gap: 32px; }
.name-row input { flex: 1; min-width: 0; }
.avatar {
  width: 107px;
  height: 107px;
  border-radius: 50%;
  background: #9e9e9e;
  color: #fff;
  display: flex;
  align-items: center;
  justify-content: center;
}
.dialog input {
  width: 100%;
  height: 136px;
  padding: 0 32px;
  border-radius: 42px;
  background: linear-gradient(#5d5e67, #5d5e67) bottom / 100% 2px no-repeat #e1e2ec;
}
.strip { margin-top: 21px; padding-left: 5px; display: flex; gap: 10px; overflow: hidden; }
.swatches { margin-top: 49px; }
.strip button {
  flex: none;
  width: 86px;
  height: 86px;
  border-radius: 50%;
  background: #d6dbed;
  color: var(--primary);
  display: flex;
  align-items: center;
  justify-content: center;
}
.strip svg { width: 39px; height: 39px; }
.save { height: 96px; margin-top: 57px; background: var(--primary); font-weight: 600; }

/* Palette */
.red { color: var(--red); }
.pink { color: var(--pink); }
.purple { color: var(--purple); }
.violet { color: var(--violet); }
.indigo { color: var(--indigo); }
.blue { color: var(--blue); }
.sky { color: var(--sky); }
.teal { color: var(--teal); }
.strip .bg-red { background: var(--red); }
.strip .bg-pink { background: var(--pink); }
.strip .bg-purple { background: var(--purple); }
.strip .bg-violet { background: var(--violet); }
.strip .bg-indigo { background: var(--indigo); }
.strip .bg-blue { background: var(--blue); }
.strip .bg-sky { background: var(--sky); }
.tint-red { background: #fcd6d6; color: var(--red); }
.tint-pink { background: #facfdf; color: var(--pink); }
.tint-purple { background: #ead1ef; color: var(--purple); }
.tint-violet { background: #dfd5f0; color: var(--violet); }
.tint-indigo { background: #d8d9f0; color: var(--indigo); }
.tint-blue { background: #d2e7fe; color: var(--blue); }
.tint-sky { background: #ccebfe; color: var(--sky); }
.tint-cyan { background: #c9eff6; color: var(--cyan); }
.tint-teal { background: #cbe7e7; color: var(--teal); }
```
